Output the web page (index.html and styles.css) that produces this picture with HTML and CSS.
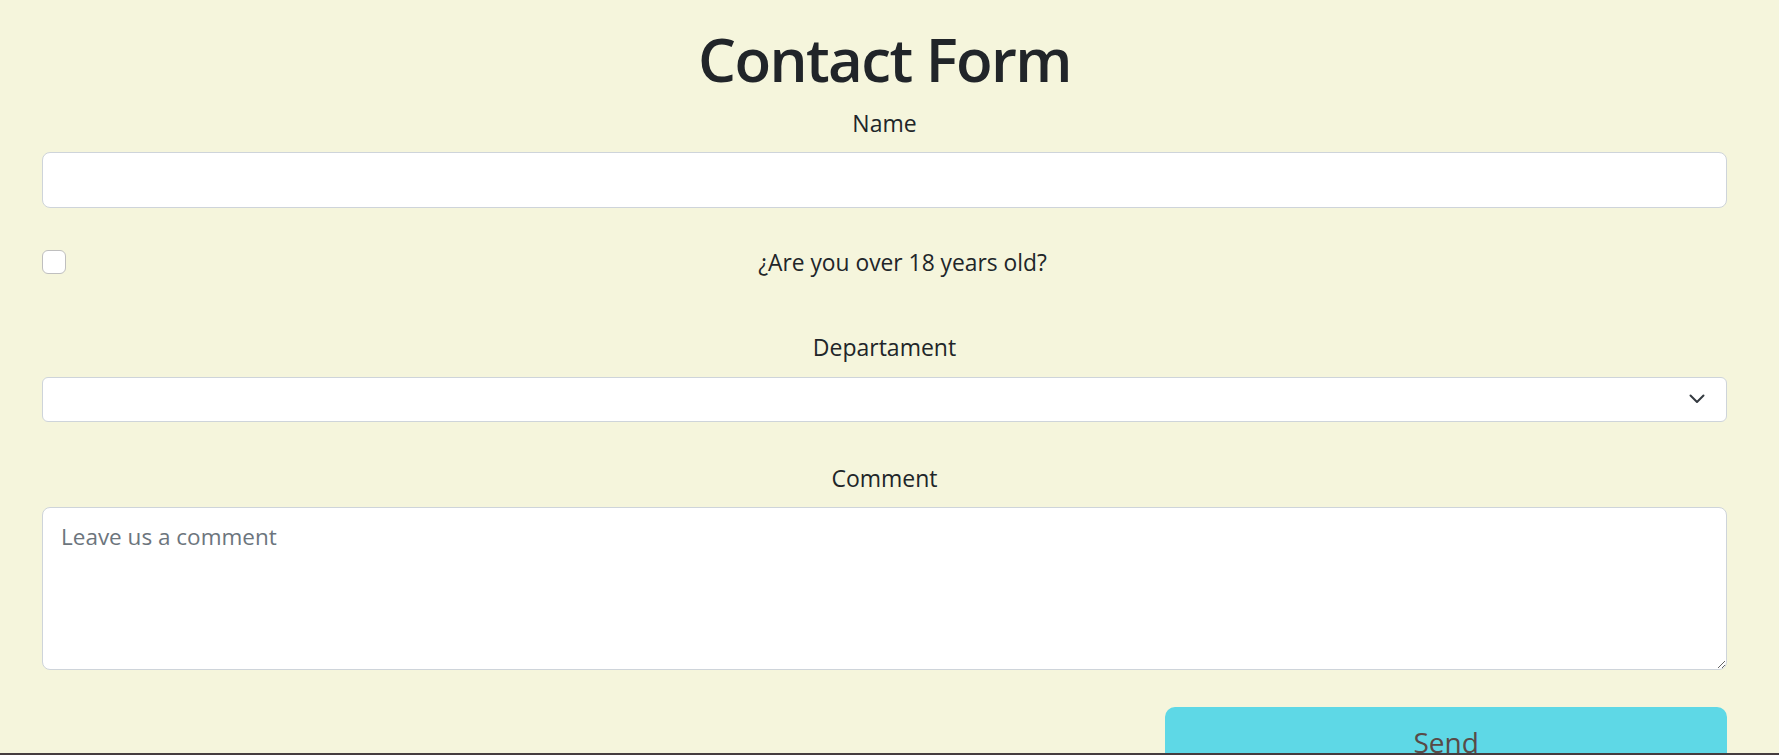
FILE: index.html
```html
<!DOCTYPE html>
<html lang="en">
<head>
<meta charset="utf-8">
<title>Contact Form</title>
<link rel="stylesheet" href="styles.css">
</head>
<body>
<div class="page">
  <main class="content">
    <form class="form">
      <h1 class="title">Contact Form</h1>

      <div class="field">
        <label class="label" for="name">Name</label>
        <input class="input input-name" id="name" type="text">
      </div>

      <div class="check-row">
        <input class="check" id="adult" type="checkbox">
        <label class="check-label" for="adult">¿Are you over 18 years old?</label>
      </div>

      <div class="field field-dept">
        <label class="label" for="dept">Departament</label>
        <div class="select-wrap">
          <select class="select" id="dept"><option></option></select>
          <svg class="chevron" width="16" height="10" viewBox="0 0 16 10" aria-hidden="true">
            <path d="M1.5 1.5 L8 8 L14.5 1.5" fill="none" stroke="#343a40" stroke-width="2" stroke-linecap="round" stroke-linejoin="round"/>
          </svg>
        </div>
      </div>

      <div class="field field-comment">
        <label class="label" for="comment">Comment</label>
        <textarea class="textarea" id="comment" placeholder="Leave us a comment"></textarea>
      </div>

      <div class="actions">
        <button class="send" type="button">Send</button>
      </div>
    </form>
  </main>
  <footer class="footer"></footer>
</div>
</body>
</html>
```
FILE: styles.css
```css
* { box-sizing: border-box; }

html, body {
  margin: 0;
  padding: 0;
  background: #f5f5dc;
}

body {
  font-family: "Open Sans", "Noto Sans", "Liberation Sans", sans-serif;
  color: #212529;
}

.page {
  height: 755px;
  display: flex;
  flex-direction: column;
}

.content {
  flex: 1;
  overflow: hidden;
  padding: 0 52px 0 42px;
}

.form {
  display: flex;
  flex-direction: column;
}

.title {
  margin: 21px 0 0;
  font-size: 60px;
  line-height: 77px;
  font-weight: 600;
  letter-spacing: -1.6px;
  text-align: center;
  color: #212529;
}

.field {
  display: flex;
  flex-direction: column;
  margin-top: 7px;
}

.label {
  font-size: 23px;
  line-height: 36px;
  text-align: center;
  margin-bottom: 11px;
}

.input {
  height: 56px;
  border: 1px solid #ced4da;
  border-radius: 8px;
  background: #fff;
  font: inherit;
  font-size: 23px;
  padding: 8px 17px;
  outline: none;
}

.check-row {
  display: flex;
  align-items: flex-start;
  gap: 12px;
  margin-top: 37px;
}

.check {
  appearance: none;
  -webkit-appearance: none;
  width: 24px;
  height: 24px;
  margin: 5px 0 0;
  flex: none;
  border: 1px solid #bfbfbf;
  border-radius: 6px;
  background: #fff;
}

.check-label {
  flex: 1;
  text-align: center;
  font-size: 22.8px;
  line-height: 36px;
}

.field-dept { margin-top: 48px; }
.field-dept .label { margin-bottom: 12px; }

.select-wrap {
  position: relative;
  height: 45px;
}

.select {
  appearance: none;
  -webkit-appearance: none;
  width: 100%;
  height: 45px;
  border: 1px solid #ced4da;
  border-radius: 6px;
  background: #fff;
  font: inherit;
  font-size: 23px;
  padding: 0 17px;
  outline: none;
}

.chevron {
  position: absolute;
  right: 22px;
  top: 17px;
  pointer-events: none;
}

.field-comment { margin-top: 38px; }

.textarea {
  height: 163px;
  border: 1px solid #ced4da;
  border-radius: 8px;
  background: #fff;
  font: inherit;
  font-size: 22.5px;
  line-height: 36px;
  padding: 11px 17px 8px 18px;
  resize: vertical;
  outline: none;
}

.textarea::placeholder { color: #6c757d; }

.actions {
  display: grid;
  grid-template-columns: 2fr 1fr;
  margin-top: 37px;
}

.send {
  grid-column: 2;
  border: none;
  border-radius: 10px;
  background: #5ed8e6;
  color: #594a47;
  font: inherit;
  font-size: 28px;
  line-height: 42px;
  padding: 14px 16px 10px;
  text-align: center;
}

.footer {
  height: 2px;
  flex: none;
  background: #453d3f;
}
```
